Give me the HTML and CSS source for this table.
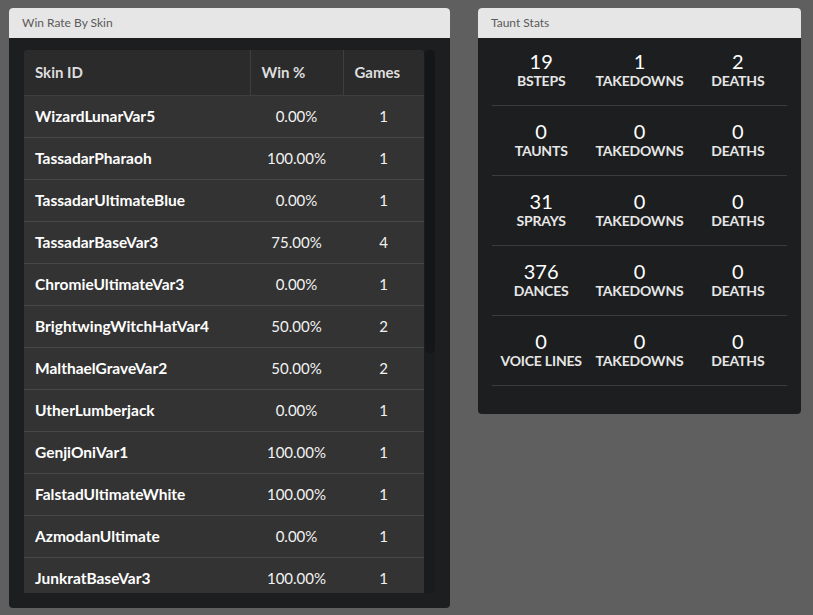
FILE: index.html
```html
<!DOCTYPE html>
<html>
<head>
<meta charset="utf-8">
<link rel="stylesheet" href="styles.css">
</head>
<body>
<div class="page">
  <section class="panel panel-skins">
    <div class="panel-header">Win Rate By Skin</div>
    <div class="panel-body skins-body">
      <div class="scroll-frame">
        <div class="table-wrap">
          <table class="skin-table">
            <colgroup><col class="c-name"><col class="c-win"><col class="c-games"></colgroup>
            <thead>
              <tr><th>Skin ID</th><th>Win %</th><th>Games</th></tr>
            </thead>
            <tbody>
              <tr><td class="name">WizardLunarVar5</td><td>0.00%</td><td>1</td></tr>
              <tr><td class="name">TassadarPharaoh</td><td>100.00%</td><td>1</td></tr>
              <tr><td class="name">TassadarUltimateBlue</td><td>0.00%</td><td>1</td></tr>
              <tr><td class="name">TassadarBaseVar3</td><td>75.00%</td><td>4</td></tr>
              <tr><td class="name">ChromieUltimateVar3</td><td>0.00%</td><td>1</td></tr>
              <tr><td class="name">BrightwingWitchHatVar4</td><td>50.00%</td><td>2</td></tr>
              <tr><td class="name">MalthaelGraveVar2</td><td>50.00%</td><td>2</td></tr>
              <tr><td class="name">UtherLumberjack</td><td>0.00%</td><td>1</td></tr>
              <tr><td class="name">GenjiOniVar1</td><td>100.00%</td><td>1</td></tr>
              <tr><td class="name">FalstadUltimateWhite</td><td>100.00%</td><td>1</td></tr>
              <tr><td class="name">AzmodanUltimate</td><td>0.00%</td><td>1</td></tr>
              <tr><td class="name">JunkratBaseVar3</td><td>100.00%</td><td>1</td></tr>
            </tbody>
          </table>
        </div>
        <div class="scroll-track"><div class="scroll-thumb"></div></div>
      </div>
    </div>
  </section>

  <section class="panel panel-taunts">
    <div class="panel-header">Taunt Stats</div>
    <div class="panel-body taunts-body">
      <div class="stat-row">
        <div class="stat"><div class="num">19</div><div class="label">BSTEPS</div></div>
        <div class="stat"><div class="num">1</div><div class="label">TAKEDOWNS</div></div>
        <div class="stat"><div class="num">2</div><div class="label">DEATHS</div></div>
      </div>
      <div class="stat-row">
        <div class="stat"><div class="num">0</div><div class="label">TAUNTS</div></div>
        <div class="stat"><div class="num">0</div><div class="label">TAKEDOWNS</div></div>
        <div class="stat"><div class="num">0</div><div class="label">DEATHS</div></div>
      </div>
      <div class="stat-row">
        <div class="stat"><div class="num">31</div><div class="label">SPRAYS</div></div>
        <div class="stat"><div class="num">0</div><div class="label">TAKEDOWNS</div></div>
        <div class="stat"><div class="num">0</div><div class="label">DEATHS</div></div>
      </div>
      <div class="stat-row">
        <div class="stat"><div class="num">376</div><div class="label">DANCES</div></div>
        <div class="stat"><div class="num">0</div><div class="label">TAKEDOWNS</div></div>
        <div class="stat"><div class="num">0</div><div class="label">DEATHS</div></div>
      </div>
      <div class="stat-row">
        <div class="stat"><div class="num">0</div><div class="label">VOICE LINES</div></div>
        <div class="stat"><div class="num">0</div><div class="label">TAKEDOWNS</div></div>
        <div class="stat"><div class="num">0</div><div class="label">DEATHS</div></div>
      </div>
    </div>
  </section>
</div>
</body>
</html>
```

FILE: styles.css
```css
* { box-sizing: border-box; }

html, body {
  margin: 0;
  background: #5f5f5f;
  font-family: Lato, "Open Sans", sans-serif;
}

.page {
  display: flex;
  align-items: flex-start;
  gap: 28px;
  padding: 8px 0 0 9px;
}

.panel {
  background: #1d1e20;
  border-radius: 4px;
  overflow: hidden;
}

.panel-skins { width: 441px; }
.panel-taunts { width: 323px; }

.panel-header {
  height: 30px;
  line-height: 30px;
  background: #e6e6e6;
  color: #5a5a5a;
  font-size: 12px;
  padding-left: 13px;
}

.skins-body {
  padding: 12px 15px 15px 15px;
}

.scroll-frame {
  display: flex;
  height: 543px;
}

.table-wrap {
  width: 400px;
  overflow: hidden;
  border-radius: 4px 4px 0 0;
  background: #333333;
}

.scroll-track {
  width: 11px;
  background: #1a1b1d;
  padding-left: 1px;
}

.scroll-thumb {
  width: 10px;
  height: 303px;
  background: #151618;
  border-radius: 5px;
}

.skin-table {
  width: 400px;
  border-collapse: collapse;
  table-layout: fixed;
  font-size: 15px;
}

.c-name { width: 226px; }
.c-win { width: 93px; }
.c-games { width: 81px; }

.skin-table th {
  height: 45px;
  background: #2b2b2b;
  color: #dedede;
  font-weight: 700;
  text-align: left;
  padding: 0 0 0 11px;
  border-bottom: 1px solid #3e3e3e;
  border-left: 1px solid #3e3e3e;
}

.skin-table th:first-child { border-left: none; }

.skin-table td {
  height: 42px;
  background: #333333;
  color: #f2f2f2;
  text-align: center;
  padding: 0;
  border-bottom: 1px solid #474747;
}

.skin-table td.name {
  text-align: left;
  padding-left: 11px;
  font-size: 15.5px;
  font-weight: 700;
  color: #ffffff;
}

.taunts-body {
  padding: 0 14px 28px 14px;
}

.stat-row {
  display: grid;
  grid-template-columns: 1fr 1fr 1fr;
  padding: 14px 0 16px 0;
  border-bottom: 1px solid #3b3c3e;
}

.stat-row:first-child { padding-top: 12px; }

.stat {
  text-align: center;
}

.num {
  font-size: 20px;
  line-height: 23px;
  color: #ffffff;
}

.label {
  font-size: 14px;
  line-height: 16px;
  font-weight: 700;
  color: #e6e6e6;
  white-space: nowrap;
  letter-spacing: -0.2px;
}
```
